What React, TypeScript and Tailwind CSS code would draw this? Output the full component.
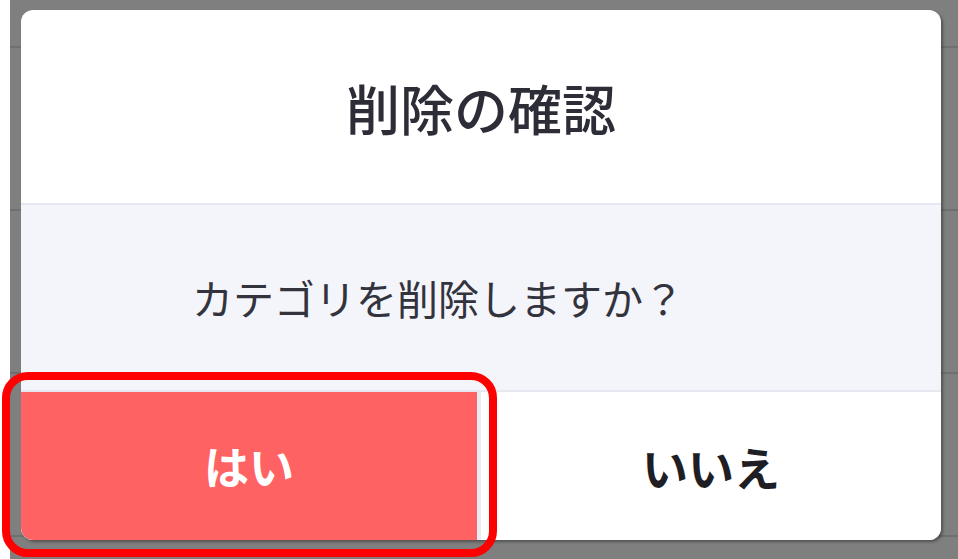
export default function App() {
  const rows = [0, 1, 2, 3];
  return (
    <div
      className="flex h-[559px] w-[958px] overflow-hidden bg-white"
      style={{ fontFamily: '"Noto Sans CJK JP", "Noto Sans", sans-serif' }}
    >
      {/* left page edge */}
      <div className="w-[10px] shrink-0 bg-white" />

      {/* dimmed page behind the dialog */}
      <div className="relative flex-1 bg-[#7f7f7f]">
        <div className="flex flex-col">
          <div className="h-[48px] border-b-2 border-[#707070]" />
          {rows.map((r) => (
            <div key={r} className="h-[163px] border-b-2 border-[#707070]" />
          ))}
        </div>

        {/* dialog */}
        <div className="absolute left-[11px] top-[10px] flex h-[530px] w-[920px] flex-col overflow-hidden rounded-[12px] bg-white shadow-[2px_2px_3px_rgba(0,0,0,0.35)]">
          <div className="flex h-[193px] items-center justify-center pt-[2px] text-[54px] font-medium text-[#2d2d38]">
            削除の確認
          </div>
          <div className="h-[2px] bg-[#e5e7f1]" />
          <div className="flex h-[185px] items-center justify-center bg-[#f4f5fa] pr-[86px] text-[41px] text-[#33333d]">
            カテゴリを削除しますか？
          </div>
          <div className="h-[2px] bg-[#e5e7f1]" />
          <div className="flex h-[148px]">
            <button className="flex w-[456px] items-center justify-center rounded-bl-[12px] bg-[#ff6262] text-[45px] font-bold text-white">
              はい
            </button>
            <div className="w-[4px] bg-[#e9ebf6]" />
            <button className="flex flex-1 items-center justify-center bg-white text-[46px] font-bold text-[#1e1e24]">
              いいえ
            </button>
          </div>
        </div>
      </div>

      {/* annotation around the confirm button */}
      <div className="pointer-events-none absolute left-[2px] top-[372px] h-[185px] w-[495px] rounded-[26px] border-[8px] border-[#ff0000]" />
    </div>
  );
}
